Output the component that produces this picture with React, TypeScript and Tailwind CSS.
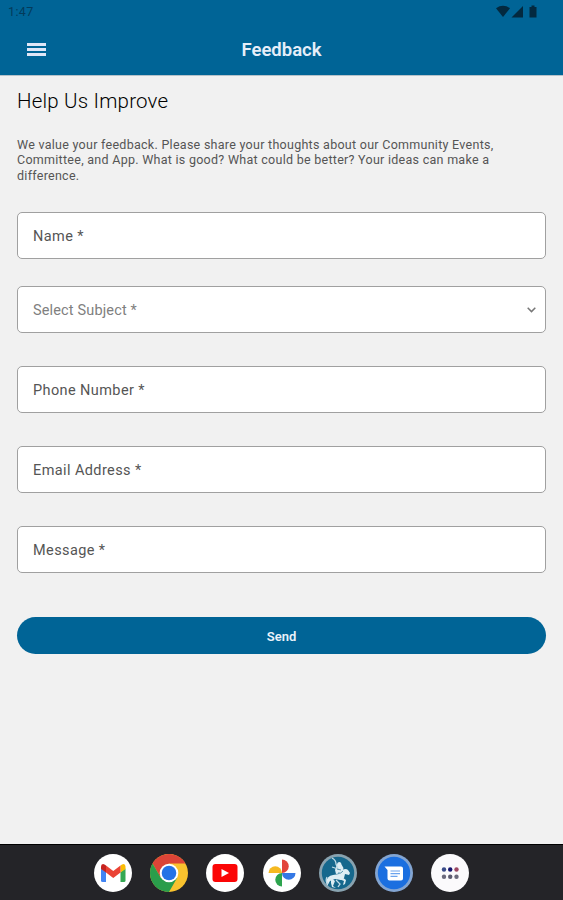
import React from "react";

function StatusBar() {
  return (
    <div className="flex h-6 items-center justify-between pl-2 pr-[25px] text-[#033b5b]">
      <span className="text-[12.5px] leading-none tracking-[0.4px]">1:47</span>
      <svg width="42" height="14" viewBox="0 0 42 14" fill="#03293f" aria-hidden="true">
        <path d="M0 3.2Q7-1.5 14 3.2L7 12Z" />
        <path d="M15.5 12.5 27 1V12.5Z" />
        <path d="M35.5 0.5h3v1.4H40.500V12.5H33.500V1.9h2Z" />
      </svg>
    </div>
  );
}

function Header() {
  return (
    <header className="h-[75px] bg-[#006496]">
      <StatusBar />
      <div className="grid h-[51px] grid-cols-[1fr_auto_1fr] items-center px-[27px]">
        <button aria-label="Menu" className="flex w-[19px] flex-col gap-[2px]">
          <span className="h-[3px] bg-[#dfe6f7]" />
          <span className="h-[3px] bg-[#dfe6f7]" />
          <span className="h-[3px] bg-[#dfe6f7]" />
        </button>
        <h1 className="pt-[2px] text-[18.5px] font-semibold leading-none text-[#e6eef9]">Feedback</h1>
      </div>
    </header>
  );
}

function Field({ label, className = "" }: { label: string; className?: string }) {
  return (
    <div className={`flex h-[47px] items-center rounded-[5px] border border-[#a0a0a0] bg-white px-[15px] pt-[3px] text-[14.5px] tracking-[0.4px] text-[#555] ${className}`}>
      {label}
    </div>
  );
}

function SelectField({ label, className = "" }: { label: string; className?: string }) {
  return (
    <div className={`flex h-[47px] items-center justify-between rounded-[5px] border border-[#a0a0a0] bg-white pl-[15px] pr-[9px] text-[14.5px] tracking-[0.15px] text-[#808080] ${className}`}>
      <span className="pt-[2px]">{label}</span>
      <svg width="9" height="6" viewBox="0 0 9 6" fill="none" stroke="#777" strokeWidth="1.5" aria-hidden="true">
        <path d="M0.7 0.8 4.5 4.6 8.3 0.8" />
      </svg>
    </div>
  );
}

function GmailIcon() {
  return (
    <svg width="38" height="38" viewBox="0 0 38 38">
      <circle cx="19" cy="19" r="19" fill="#fff" />
      <path d="M7 14.5 12 18v10H8.5Q7 28 7 26.5Z" fill="#4285f4" />
      <path d="M31.5 14.5 26.5 18v10H30q1.500 0 1.500-1.500Z" fill="#34a853" />
      <path d="M7 15v-2.200q0-3.600 3.500-2.400L12 11.500v7Z" fill="#c5221f" />
      <path d="M31.500 15v-2.200q0-3.600-3.500-2.400L26.500 11.500v7Z" fill="#fbbc04" />
      <path d="m12 11.500 7.250 5.500 7.250-5.500v7L19.250 24 12 18.500Z" fill="#ea4335" />
    </svg>
  );
}

function ChromeIcon() {
  return (
    <svg width="38" height="38" viewBox="0 0 38 38">
      <circle cx="19" cy="19" r="19" fill="#f9c22e" />
      <path d="M2.550 9.500A19 19 0 0 1 35.450 9.500H19L10.800 23.700Z" fill="#dc4437" />
      <path d="M2.550 9.500A19 19 0 0 0 19 38L27.200 23.700 19 27 10.800 23.700Z" fill="#2a9d4b" />
      <circle cx="19" cy="19" r="9.300" fill="#fff" />
      <circle cx="19" cy="19" r="7.300" fill="#2573e6" />
    </svg>
  );
}

function YouTubeIcon() {
  return (
    <svg width="38" height="38" viewBox="0 0 38 38">
      <circle cx="19" cy="19" r="19" fill="#fff" />
      <rect x="6.500" y="10" width="25" height="18" rx="3" fill="#fb0505" />
      <path d="M15.500 15v8l7.500-4Z" fill="#fff" />
    </svg>
  );
}

function PhotosIcon() {
  return (
    <svg width="38" height="38" viewBox="0 0 38 38">
      <circle cx="19" cy="19" r="19" fill="#fff" />
      <path d="M19 5.500a6.750 6.750 0 0 1 0 13.500Z" fill="#e2443b" />
      <path d="M32.500 19a6.750 6.750 0 0 1-13.500 0Z" fill="#3478e5" />
      <path d="M19 32.500a6.750 6.750 0 0 1 0-13.500Z" fill="#2da44e" />
      <path d="M5.500 19a6.750 6.750 0 0 1 13.500 0Z" fill="#f5b921" />
    </svg>
  );
}

function CommunityIcon() {
  return (
    <svg width="38" height="38" viewBox="0 0 38 38">
      <circle cx="19" cy="19" r="19" fill="#89a3b0" />
      <circle cx="19" cy="19" r="16.200" fill="#16688d" />
      <g fill="#deedf3">
        <path d="M18 11q0-3 2.500-3 2 0 2 2.500l2 3.500-1.500 5-6 1-1-4Z" />
        <path d="M23 16q4-2 6 0l2 3-1 2-4-1-1 4-3 2-6-1-5 2-3 5-1-4q1-6 7-7l6-1Z" />
        <path d="m23 23 4 3-1 4-2 1 1-4-5-2ZM12 24l4 3-2 5 3 2-4-1-1-4Z" />
      </g>
      <path d="M13 4q4 2 4 6l2 5-6-2M8 23q-2 4 1 7M17 26l4 4-2 3" stroke="#c1dce8" strokeWidth="1.300" fill="none" />
      <path d="m18 15 4 1M19 19q3 1 5-2" stroke="#347e9c" strokeWidth="0.800" fill="none" />
    </svg>
  );
}

function MessagesIcon() {
  return (
    <svg width="38" height="38" viewBox="0 0 38 38">
      <circle cx="19" cy="19" r="19" fill="#83a5d2" />
      <circle cx="19" cy="19" r="16.200" fill="#1b6fe0" />
      <path d="M9.500 12.500H26q2 0 2 2v10q0 2-2 2H14.500q-2 0-2-2V16Z" fill="#fff" />
      <path d="M15.500 17h9.500M15.500 19.700h9.500M15.500 22.400h7" stroke="#6ca4ee" strokeWidth="1.200" />
    </svg>
  );
}

function AppsIcon() {
  return (
    <svg width="38" height="38" viewBox="0 0 38 38">
      <circle cx="19" cy="19" r="19" fill="#fbfafc" />
      <circle cx="13" cy="15.500" r="2.200" fill="#394b88" />
      <circle cx="19.200" cy="15.500" r="2.200" fill="#15156f" />
      <circle cx="25.500" cy="15.500" r="2.200" fill="#9c4763" />
      <circle cx="13" cy="22.800" r="2.200" fill="#6b6a7c" />
      <circle cx="19.200" cy="22.800" r="2.200" fill="#5c5b70" />
      <circle cx="25.500" cy="22.800" r="2.200" fill="#6b6a7c" />
    </svg>
  );
}

export default function App() {
  return (
    <div className="flex h-[900px] w-[563px] flex-col overflow-hidden bg-[#f1f1f1] font-[Roboto,sans-serif]">
      <Header />
      <main className="flex flex-1 flex-col border-t border-[#b5c2ca] px-[17px]">
        <h2 className="mt-[12px] text-[20.500px] font-light leading-[26px] tracking-[0.2px] text-[#000]">Help Us Improve</h2>
        <p className="mt-[23px] whitespace-nowrap text-[12.500px] leading-[15.400px] tracking-[0.275px] text-[#555]">
          We value your feedback. Please share your thoughts about our Community Events,<br />
          Committee, and App. What is good? What could be better? Your ideas can make a<br />
          difference.
        </p>
        <Field label="Name *" className="mt-[28.300px]" />
        <SelectField label="Select Subject *" className="mt-[27.500px]" />
        <Field label="Phone Number *" className="mt-[33px]" />
        <Field label="Email Address *" className="mt-[33px]" />
        <Field label="Message *" className="mt-[33px]" />
        <button className="mt-[44px] h-[37px] rounded-full bg-[#006496] pt-[2px] text-[13px] font-semibold text-[#eaf2fa]">Send</button>
      </main>
      <nav className="flex h-[56px] items-center justify-center gap-[18.200px] border-t border-black bg-[#242428]">
        <GmailIcon />
        <ChromeIcon />
        <YouTubeIcon />
        <PhotosIcon />
        <CommunityIcon />
        <MessagesIcon />
        <AppsIcon />
      </nav>
    </div>
  );
}
